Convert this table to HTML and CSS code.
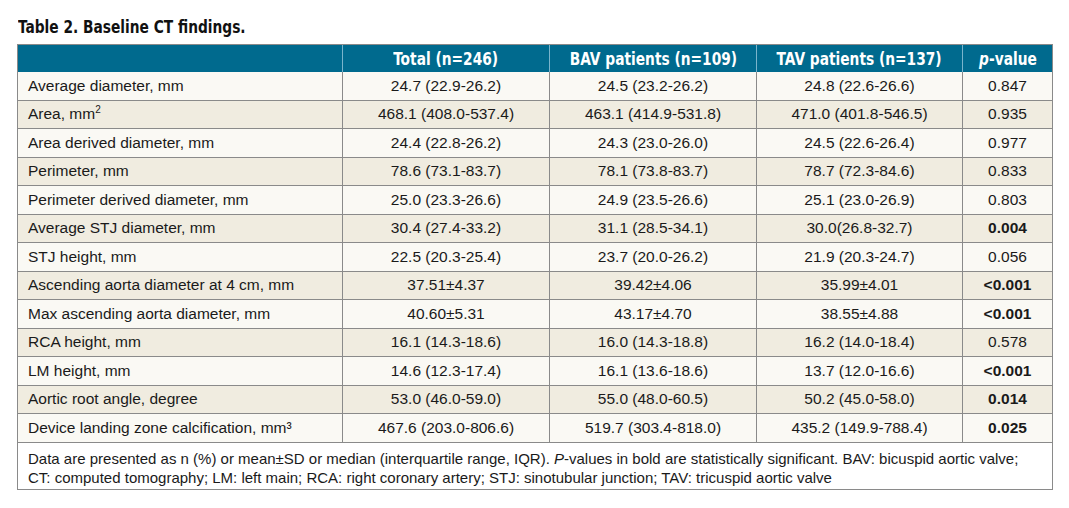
FILE: index.html
```html
<!DOCTYPE html>
<html>
<head>
<meta charset="utf-8">
<link rel="stylesheet" href="styles.css">
</head>
<body>
<div class="page">
  <h1 class="title"><span class="cond">Table 2. Baseline CT findings.</span></h1>
  <table class="data">
    <colgroup>
      <col class="c1"><col class="c2"><col class="c3"><col class="c4"><col class="c5">
    </colgroup>
    <thead>
      <tr>
        <th></th>
        <th><span class="cond">Total (n=246)</span></th>
        <th><span class="cond">BAV patients (n=109)</span></th>
        <th><span class="cond">TAV patients (n=137)</span></th>
        <th><span class="cond"><i>p</i>-value</span></th>
      </tr>
    </thead>
    <tbody>
      <tr><td>Average diameter, mm</td><td>24.7 (22.9-26.2)</td><td>24.5 (23.2-26.2)</td><td>24.8 (22.6-26.6)</td><td>0.847</td></tr>
      <tr><td>Area, mm<sup>2</sup></td><td>468.1 (408.0-537.4)</td><td>463.1 (414.9-531.8)</td><td>471.0 (401.8-546.5)</td><td>0.935</td></tr>
      <tr><td>Area derived diameter, mm</td><td>24.4 (22.8-26.2)</td><td>24.3 (23.0-26.0)</td><td>24.5 (22.6-26.4)</td><td>0.977</td></tr>
      <tr><td>Perimeter, mm</td><td>78.6 (73.1-83.7)</td><td>78.1 (73.8-83.7)</td><td>78.7 (72.3-84.6)</td><td>0.833</td></tr>
      <tr><td>Perimeter derived diameter, mm</td><td>25.0 (23.3-26.6)</td><td>24.9 (23.5-26.6)</td><td>25.1 (23.0-26.9)</td><td>0.803</td></tr>
      <tr><td>Average STJ diameter, mm</td><td>30.4 (27.4-33.2)</td><td>31.1 (28.5-34.1)</td><td>30.0(26.8-32.7)</td><td class="b">0.004</td></tr>
      <tr><td>STJ height, mm</td><td>22.5 (20.3-25.4)</td><td>23.7 (20.0-26.2)</td><td>21.9 (20.3-24.7)</td><td>0.056</td></tr>
      <tr><td>Ascending aorta diameter at 4 cm, mm</td><td>37.51±4.37</td><td>39.42±4.06</td><td>35.99±4.01</td><td class="b">&lt;0.001</td></tr>
      <tr><td>Max ascending aorta diameter, mm</td><td>40.60±5.31</td><td>43.17±4.70</td><td>38.55±4.88</td><td class="b">&lt;0.001</td></tr>
      <tr><td>RCA height, mm</td><td>16.1 (14.3-18.6)</td><td>16.0 (14.3-18.8)</td><td>16.2 (14.0-18.4)</td><td>0.578</td></tr>
      <tr><td>LM height, mm</td><td>14.6 (12.3-17.4)</td><td>16.1 (13.6-18.6)</td><td>13.7 (12.0-16.6)</td><td class="b">&lt;0.001</td></tr>
      <tr><td>Aortic root angle, degree</td><td>53.0 (46.0-59.0)</td><td>55.0 (48.0-60.5)</td><td>50.2 (45.0-58.0)</td><td class="b">0.014</td></tr>
      <tr><td>Device landing zone calcification, mm³</td><td>467.6 (203.0-806.6)</td><td>519.7 (303.4-818.0)</td><td>435.2 (149.9-788.4)</td><td class="b">0.025</td></tr>
    </tbody>
    <tfoot>
      <tr><td colspan="5">Data are presented as n (%) or mean±SD or median (interquartile range, IQR). <i>P</i>-values in bold are statistically significant. BAV: bicuspid aortic valve;<br>CT: computed tomography; LM: left main; RCA: right coronary artery; STJ: sinotubular junction; TAV: tricuspid aortic valve</td></tr>
    </tfoot>
  </table>
</div>
</body>
</html>
```

FILE: styles.css
```css
html, body {
  margin: 0;
  padding: 0;
  background: #ffffff;
}
.page {
  padding: 15px 17px 0 17px;
  width: 1035px;
}
.cond {
  display: inline-block;
  white-space: nowrap;
  transform: scaleX(0.85);
}
.title {
  margin: 0 0 6px 1px;
  font-family: "DejaVu Sans Condensed", "DejaVu Sans", sans-serif;
  font-weight: bold;
  font-size: 18px;
  line-height: 23px;
  color: #111;
}
.title .cond {
  transform-origin: left center;
}
.data {
  border-collapse: collapse;
  width: 1035px;
  table-layout: fixed;
  font-family: "Liberation Sans", Arial, sans-serif;
  font-size: 15.5px;
  color: #1a1a1a;
  border: 1px solid #8a8a8a;
}
.c1 { width: 325px; }
.c2 { width: 207px; }
.c3 { width: 207px; }
.c4 { width: 206px; }
.c5 { width: 90px; }
.data th {
  background: #006a8e;
  color: #ffffff;
  font-family: "DejaVu Sans Condensed", "DejaVu Sans", sans-serif;
  font-weight: bold;
  font-size: 18px;
  line-height: 20px;
  height: 27px;
  padding: 0;
  text-align: center;
  border-left: 1px solid #7ab4cc;
  border-top: 1px solid #8a8a8a;
  white-space: nowrap;
}
.data th:first-child { border-left: 1px solid #8a8a8a; }
.data tbody td {
  height: 27.5px;
  padding: 0 10px;
  text-align: center;
  border: 1px solid #8a8a8a;
  border-top: none;
  line-height: 18px;
}
.data tbody td:first-child {
  text-align: left;
}
.data tbody tr:nth-child(odd) td { background: #faf9f4; }
.data tbody tr:nth-child(even) td { background: #f0ece0; }
.data td.b { font-weight: bold; }
.data sup {
  font-size: 10px;
  line-height: 0;
  vertical-align: 6px;
}
.data tfoot td {
  padding: 6px 10px 1px 10px;
  font-size: 15px;
  line-height: 19.5px;
  text-align: left;
  background: #ffffff;
  border: 1px solid #8a8a8a;
}
```
